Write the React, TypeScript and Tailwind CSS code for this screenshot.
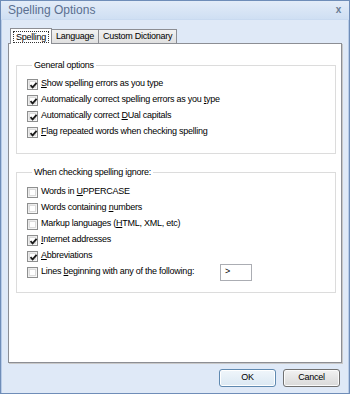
import React from 'react';

type Row = { pre: string; key: string; post: string; checked: boolean };

const general: Row[] = [
  { pre: '', key: 'S', post: 'how spelling errors as you type', checked: true },
  { pre: 'Automatically correct spelling errors as you ', key: 't', post: 'ype', checked: true },
  { pre: 'Automatically correct ', key: 'D', post: 'Ual capitals', checked: true },
  { pre: '', key: 'F', post: 'lag repeated words when checking spelling', checked: true },
];

const ignore: Row[] = [
  { pre: 'Words in ', key: 'U', post: 'PPERCASE', checked: false },
  { pre: 'Words containing ', key: 'n', post: 'umbers', checked: false },
  { pre: 'Markup languages (', key: 'H', post: 'TML, XML, etc)', checked: false },
  { pre: '', key: 'I', post: 'nternet addresses', checked: true },
  { pre: '', key: 'A', post: 'bbreviations', checked: true },
];

function Check({ checked }: { checked: boolean }) {
  return (
    <span className="w-[11px] h-[11px] shrink-0 border border-[#8e8f8f] bg-gradient-to-br from-[#e6e6e6] to-[#fbfbfb] p-px">
      <span className="block w-full h-full bg-white border border-[#dcdcdc] relative">
        {checked && (
          <svg viewBox="0 0 9 9" className="absolute -left-px -top-px w-[9px] h-[9px]">
            <path d="M1.5 4.2 L3.6 6.4 L7.6 1.8" fill="none" stroke="#1a1a1a" strokeWidth="1.8" />
          </svg>
        )}
      </span>
    </span>
  );
}

function Option({ row, children }: { row: Row; children?: React.ReactNode }) {
  return (
    <div className="h-[16px] flex items-center gap-[3px]">
      <Check checked={row.checked} />
      <span className="whitespace-nowrap">
        {row.pre}
        <span className="underline underline-offset-1">{row.key}</span>
        {row.post}
      </span>
      {children}
    </div>
  );
}

function Group({ title, className, children }: { title: string; className: string; children: React.ReactNode }) {
  return (
    <fieldset className={`border border-[#dcdcdc] ml-[7px] mr-[5px] pl-[10px] ${className}`}>
      <legend className="ml-[5px] px-[2px] leading-[12px]">{title}</legend>
      {children}
    </fieldset>
  );
}

export default function App() {
  return (
    <div className="w-[350px] h-[394px] flex flex-col border border-[#6f8db8] bg-[#dfe9f7] font-['Liberation_Sans',Arial,sans-serif] text-[9px] tracking-[-0.25px] text-black overflow-hidden">
      {/* title bar */}
      <div className="h-[19px] shrink-0 flex items-center justify-between pl-[7px] pr-[8px] bg-gradient-to-b from-[#e3ecf8] to-[#cfdff3] border-b border-[#c9daf0]">
        <span className="text-[12px] tracking-normal text-[#5a6f90] leading-none">Spelling Options</span>
        <span className="text-[10px] text-[#6b7b93] font-bold leading-none">x</span>
      </div>

      <div className="flex-1 flex flex-col px-[6px] pt-[8px] pb-[6px] border-x border-[#b8cce8]">
        {/* tabs */}
        <div className="h-[15px] flex items-end pl-[2px] relative z-10">
          <div className="h-[16px] -mb-px px-[2px] flex items-center bg-white border border-b-0 border-[#8c8e94]">
            <span className="px-[2px] border border-dotted border-[#333] leading-[10px]">Spelling</span>
          </div>
          <div className="h-[14px] px-[4px] flex items-center bg-gradient-to-b from-[#f2f2f2] to-[#e0e0e0] border border-l-0 border-b-0 border-[#8c8e94]">
            Language
          </div>
          <div className="h-[14px] px-[4px] flex items-center bg-gradient-to-b from-[#f2f2f2] to-[#e0e0e0] border border-l-0 border-b-0 border-[#8c8e94]">
            Custom Dictionary
          </div>
        </div>

        {/* panel */}
        <div className="flex-1 bg-white border border-[#8c8e94] shadow-[1px_1px_0_#c8c8c8] pt-[15px]">
          <Group title="General options" className="pt-[5px] pb-[13px]">
            {general.map((r) => (
              <Option key={r.pre + r.key + r.post} row={r} />
            ))}
          </Group>

          <Group title="When checking spelling ignore:" className="mt-[12px] pt-[6px] pb-[12px]">
            {ignore.map((r) => (
              <Option key={r.pre + r.key + r.post} row={r} />
            ))}
            <Option row={{ pre: 'Lines ', key: 'b', post: 'eginning with any of the following:', checked: false }}>
              <span className="ml-auto mr-[83px] w-[32px] h-[17px] border border-[#abadb3] bg-white pl-[4px] flex items-center">
                &gt;
              </span>
            </Option>
          </Group>
        </div>

        {/* buttons */}
        <div className="mt-[6px] flex justify-end gap-[7px] pr-[2px]">
          <button className="w-[57px] h-[18px] rounded-[3px] border border-[#5f89b0] bg-gradient-to-b from-[#f0f6fb] to-[#dbe8f3] shadow-[inset_0_0_0_1px_#ffffff]">
            OK
          </button>
          <button className="w-[57px] h-[18px] rounded-[3px] border border-[#707070] bg-gradient-to-b from-[#f2f2f2] to-[#d9d9d9] shadow-[inset_0_0_0_1px_#fbfbfb]">
            Cancel
          </button>
        </div>
      </div>
    </div>
  );
}
